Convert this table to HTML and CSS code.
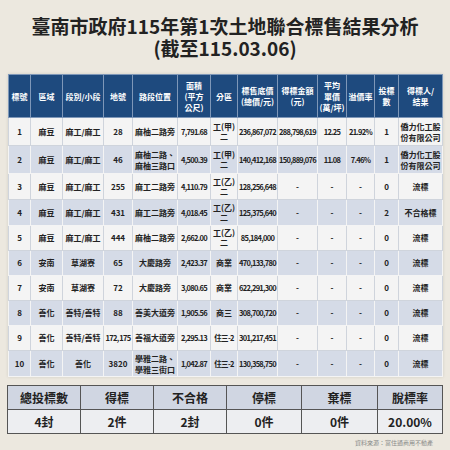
FILE: index.html
```html
<!DOCTYPE html>
<html lang="zh-Hant">
<head>
    <meta charset="UTF-8">
    <meta name="viewport" content="width=device-width, initial-scale=1.0">
    <title>臺南市政府115年第1次土地聯合標售結果分析</title>
    <link rel="stylesheet" href="styles.css">
</head>
<body>
    <div class="page">
        <h1 class="title">臺南市政府115年第1次土地聯合標售結果分析<br>(截至115.03.06)</h1>

        <table class="result">
            <colgroup>
                <col class="c1"><col class="c2"><col class="c3"><col class="c4"><col class="c5">
                <col class="c6"><col class="c7"><col class="c8"><col class="c9"><col class="c10">
                <col class="c11"><col class="c12"><col class="c13">
            </colgroup>
            <thead>
                <tr>
                    <th>標號</th>
                    <th>區域</th>
                    <th>段別/小段</th>
                    <th>地號</th>
                    <th>路段位置</th>
                    <th>面積<br>(平方<br>公尺)</th>
                    <th>分區</th>
                    <th>標售底價<br>(總價/元)</th>
                    <th>得標金額<br>(元)</th>
                    <th>平均<br>單價<br>(萬/坪)</th>
                    <th>溢價率</th>
                    <th>投標<br>數</th>
                    <th>得標人/<br>結果</th>
                </tr>
            </thead>
            <tbody>
                <tr class="light h28">
                    <td>1</td><td>麻豆</td><td>麻工/麻工</td><td>28</td><td>麻柚二路旁</td>
                    <td class="num">7,791.68</td><td class="zone">工(甲)<br>二</td>
                    <td class="num">236,867,072</td><td class="num">288,798,619</td>
                    <td class="num">12.25</td><td class="num">21.92%</td><td>1</td>
                    <td class="two">僑力化工股<br>份有限公司</td>
                </tr>
                <tr class="blue h28">
                    <td>2</td><td>麻豆</td><td>麻工/麻工</td><td>46</td><td class="two">麻柚二路、<br>麻柚三路口</td>
                    <td class="num">4,500.39</td><td class="zone">工(甲)<br>二</td>
                    <td class="num">140,412,168</td><td class="num">150,889,076</td>
                    <td class="num">11.08</td><td class="num">7.46%</td><td>1</td>
                    <td class="two">僑力化工股<br>份有限公司</td>
                </tr>
                <tr class="light h26">
                    <td>3</td><td>麻豆</td><td>麻工/麻工</td><td>255</td><td>麻工二路旁</td>
                    <td class="num">4,110.79</td><td class="zone">工(乙)<br>二</td>
                    <td class="num">128,256,648</td><td>-</td><td>-</td><td>-</td><td>0</td><td>流標</td>
                </tr>
                <tr class="blue h26">
                    <td>4</td><td>麻豆</td><td>麻工/麻工</td><td>431</td><td>麻工二路旁</td>
                    <td class="num">4,018.45</td><td class="zone">工(乙)<br>二</td>
                    <td class="num">125,375,640</td><td>-</td><td>-</td><td>-</td><td>2</td><td>不合格標</td>
                </tr>
                <tr class="light h25">
                    <td>5</td><td>麻豆</td><td>麻工/麻工</td><td>444</td><td>麻柚二路旁</td>
                    <td class="num">2,662.00</td><td class="zone">工(乙)<br>二</td>
                    <td class="num">85,184,000</td><td>-</td><td>-</td><td>-</td><td>0</td><td>流標</td>
                </tr>
                <tr class="blue h25">
                    <td>6</td><td>安南</td><td>草湖寮</td><td>65</td><td>大慶路旁</td>
                    <td class="num">2,423.37</td><td>商業</td>
                    <td class="num">470,133,780</td><td>-</td><td>-</td><td>-</td><td>0</td><td>流標</td>
                </tr>
                <tr class="light h25">
                    <td>7</td><td>安南</td><td>草湖寮</td><td>72</td><td>大慶路旁</td>
                    <td class="num">3,080.65</td><td>商業</td>
                    <td class="num">622,291,300</td><td>-</td><td>-</td><td>-</td><td>0</td><td>流標</td>
                </tr>
                <tr class="blue h25">
                    <td>8</td><td>善化</td><td>善特/善特</td><td>88</td><td>善美大道旁</td>
                    <td class="num">1,905.56</td><td>商三</td>
                    <td class="num">308,700,720</td><td>-</td><td>-</td><td>-</td><td>0</td><td>流標</td>
                </tr>
                <tr class="light h25">
                    <td>9</td><td>善化</td><td>善特/善特</td><td class="num">172, 175</td><td>善福大道旁</td>
                    <td class="num">2,295.13</td><td class="num">住三-2</td>
                    <td class="num">301,217,451</td><td>-</td><td>-</td><td>-</td><td>0</td><td>流標</td>
                </tr>
                <tr class="blue h26">
                    <td>10</td><td>善化</td><td>善化</td><td>3820</td><td class="two">學雅二路、<br>學雅三街口</td>
                    <td class="num">1,042.87</td><td class="num">住三-2</td>
                    <td class="num">130,358,750</td><td>-</td><td>-</td><td>-</td><td>0</td><td>流標</td>
                </tr>
            </tbody>
        </table>

        <table class="summary">
            <colgroup>
                <col class="s1"><col class="s2"><col class="s3"><col class="s4"><col class="s5"><col class="s6">
            </colgroup>
            <thead>
                <tr>
                    <th>總投標數</th><th>得標</th><th>不合格</th><th>停標</th><th>棄標</th><th>脫標率</th>
                </tr>
            </thead>
            <tbody>
                <tr>
                    <td>4封</td><td>2件</td><td>2封</td><td>0件</td><td>0件</td><td>20.00%</td>
                </tr>
            </tbody>
        </table>

        <p class="source">資料來源：富住通商用不動產</p>
    </div>
</body>
</html>
```

FILE: styles.css
```css
* {
    margin: 0;
    padding: 0;
    box-sizing: border-box;
}

body {
    background: #ece8df;
    font-family: "Noto Sans CJK TC", "Noto Sans", sans-serif;
    color: #222;
}

.page {
    width: 450px;
    height: 450px;
    padding: 15px 8px 0;
}

.title {
    font-size: 19px;
    line-height: 22px;
    font-weight: 700;
    text-align: center;
    color: #222;
}

/* main result table */
.result {
    margin-top: 15px;
    width: 434px;
    table-layout: fixed;
    border-collapse: collapse;
    box-shadow: 0 0 3px rgba(0, 0, 0, 0.12);
}

.c1 { width: 22px; }
.c2 { width: 32px; }
.c3 { width: 41px; }
.c4 { width: 29px; }
.c5 { width: 45px; }
.c6 { width: 33px; }
.c7 { width: 27px; }
.c8 { width: 40px; }
.c9 { width: 40px; }
.c10 { width: 29px; }
.c11 { width: 28px; }
.c12 { width: 24px; }
.c13 { width: 44px; }

.result th {
    height: 43px;
    background: #1e4a7e;
    color: #fff;
    font-size: 8px;
    line-height: 11px;
    font-weight: 700;
    border: 1px solid #7e97b8;
    text-align: center;
    vertical-align: middle;
}

.result td {
    font-size: 8px;
    line-height: 10px;
    font-weight: 700;
    text-align: center;
    vertical-align: middle;
    white-space: nowrap;
    overflow: hidden;
    color: #222;
}

.result .light td {
    background: #f4f4f4;
    border: 1px solid #cfd4dc;
}

.result .blue td {
    background: #d5dbe7;
    border: 1px solid #f4f4f4;
}

.h28 { height: 28px; }
.h26 { height: 26px; }
.h25 { height: 25px; }

.result .num {
    font-size: 7.5px;
    letter-spacing: -0.7px;
}

.result .zone {
    font-size: 8px;
    line-height: 10px;
}

.result .two {
    line-height: 11px;
}

/* summary table */
.summary {
    margin-top: 8px;
    width: 435px;
    margin-left: -1px;
    table-layout: fixed;
    border-collapse: collapse;
}

.s1 { width: 73px; }
.s2 { width: 73px; }
.s3 { width: 73px; }
.s4 { width: 75px; }
.s5 { width: 76px; }
.s6 { width: 65px; }

.summary th,
.summary td {
    height: 24px;
    border: 1px solid #555;
    font-size: 12px;
    font-weight: 700;
    text-align: center;
    vertical-align: middle;
    color: #222;
}

.summary th {
    background: #d0d6e2;
}

.summary td {
    background: #edeef1;
}

.source {
    margin-top: 5px;
    padding-right: 9px;
    text-align: right;
    font-size: 6px;
    line-height: 8px;
    color: #888;
}
```
